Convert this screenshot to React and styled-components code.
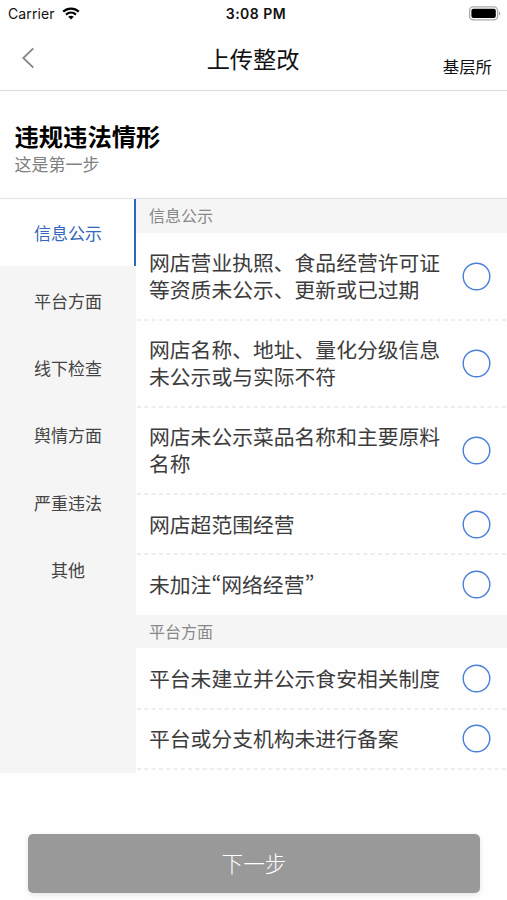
import React from 'react';
import styled, { createGlobalStyle } from 'styled-components';
import { useState } from 'react';


const GlobalStyle = createGlobalStyle`
* {
  box-sizing: border-box;
}
body {
  margin: 0;
  background: #fefefe;
  font-family: "Noto Sans CJK SC", sans-serif;
}
button {
  margin: 0;
  padding: 0;
  border: none;
  background: none;
  font-family: inherit;
  cursor: pointer;
}
`;

const Screen = styled.div`
width: 507px;
height: 900px;
display: flex;
flex-direction: column;
overflow: hidden;
`;

const StatusBar = styled.div`
display: grid;
grid-template-columns: 1fr auto 1fr;
align-items: center;
height: 27px;
padding: 0 6px 0 8px;
color: #111;
font-family: Inter, sans-serif;
font-size: 14px;
`;

const Carrier = styled.div`
display: flex;
align-items: center;
gap: 7px;
letter-spacing: 0.1px;
`;

const Time = styled.div`
padding-left: 3px;
font-size: 14px;
font-weight: 600;
letter-spacing: 0.5px;
`;

const Battery = styled.svg`
justify-self: end;
`;

const NavBar = styled.div`
display: grid;
grid-template-columns: 1fr auto 1fr;
align-items: center;
height: 64px;
padding: 0 15px 0 21px;
border-bottom: 1px solid #dcdcdc;
`;

const BackButton = styled.button`
display: flex;
justify-self: start;
padding-bottom: 1px;
`;

const NavTitle = styled.div`
padding: 0 7px 1px 0;
color: #111;
font-size: 23.2px;
line-height: 30px;
`;

const NavAction = styled.button`
justify-self: end;
padding-top: 14px;
color: #111;
font-size: 16.4px;
line-height: 24px;
`;

const Heading = styled.div`
height: 107px;
padding: 29px 14.5px 0;
`;

const HeadingTitle = styled.h1`
margin: 0;
color: #000;
font-size: 24.3px;
font-weight: 700;
line-height: 32px;
`;

const HeadingNote = styled.p`
margin: 0;
color: #808080;
font-size: 17px;
line-height: 23px;
`;

const Content = styled.div`
display: flex;
height: 575px;
border-top: 1px solid #e3e3e3;
`;

const Sidebar = styled.div`
display: flex;
flex-direction: column;
width: 136px;
background: #f5f5f5;
`;

const SidebarItem = styled.button`
height: 67.4px;
padding-left: 2px;
border-right: 2px solid ${props => props.$active ? '#2f66c4' : 'transparent'};
background: ${props => props.$active ? '#fefefe' : 'transparent'};
color: ${props => props.$active ? '#3468bd' : '#444'};
font-size: 17px;
`;

const List = styled.div`
flex: 1;
`;

const SectionTitle = styled.div`
height: 33.5px;
padding-left: 13px;
background: #f5f5f5;
color: #888;
font-size: 16px;
line-height: 32px;
`;

const Row = styled.div`
display: flex;
align-items: center;
justify-content: space-between;
height: ${props => props.$tall ? '87.2px' : '60.4px'};
padding: 0 16px 0 13px;
cursor: pointer;
`;

const Divider = styled.svg`
display: block;
width: 100%;
height: 2px;
margin: -1px 0;
`;

const RowText = styled.div`
width: 293px;
padding-bottom: 0.4px;
color: #3c3c3c;
font-size: 20.8px;
font-feature-settings: "pwid";
line-height: 27px;
`;

const Footer = styled.div`
padding: 61px 27px 0 28px;
`;

const NextButton = styled.button`
width: 100%;
height: 59px;
padding-bottom: 2px;
border-radius: 5px;
background: #999;
box-shadow: 0 2px 5px rgba(0, 0, 0, 0.1);
color: #fff;
font-size: 21.6px;
font-weight: 300;
`;


const sections = [
  {
    title: '信息公示',
    items: [
      '网店营业执照、食品经营许可证等资质未公示、更新或已过期',
      '网店名称、地址、量化分级信息未公示或与实际不符',
      '网店未公示菜品名称和主要原料名称',
      '网店超范围经营',
      '未加注“网络经营”',
    ],
  },
  {
    title: '平台方面',
    items: [
      '平台未建立并公示食安相关制度',
      '平台或分支机构未进行备案',
    ],
  },
]

const tabs = ['信息公示', '平台方面', '线下检查', '舆情方面', '严重违法', '其他']


const Radio=({checked})=> (
  <svg width="29" height="29" viewBox="0 0 29 29">
    <circle cx="14.5" cy="14.5" r="13.3" fill={checked ? '#4a80d8' : 'none'} stroke="#4a80d8" strokeWidth="1.4" />
  </svg>
)


const App=()=> {

  const [tab,setTab]=useState(tabs[0])
  const [checked,setChecked]=useState([])

  const toggle = (name) => {
    setChecked(checked.includes(name) ? checked.filter(c => c !== name) : [...checked, name])
  }

  return (
    <Screen>
      <GlobalStyle />

      <StatusBar>
        <Carrier>
          Carrier
          <svg width="18" height="13" viewBox="0 0 18 13">
            <path d="M1.2 4.7C5.6 .6 12.4 .6 16.8 4.7" fill="none" stroke="#000" strokeWidth="2.3" />
            <path d="M4 7.6C6.9 5 11.1 5 14 7.6" fill="none" stroke="#000" strokeWidth="2.1" />
            <path d="M6.2 9.7C7.8 8.3 10.2 8.3 11.8 9.7L9 12.6Z" fill="#000" />
          </svg>
        </Carrier>
        <Time>3:08 PM</Time>
        <Battery width="33" height="15" viewBox="0 0 33 15">
          <rect x="1.6" y="0.9" width="28" height="13" rx="3.6" fill="#fff" stroke="#aaa" strokeWidth="1.3" />
          <rect x="3.4" y="2.7" width="24.4" height="9.4" rx="2" fill="#000" />
          <path d="M31 5.4C32.7 6 32.7 8.9 31 9.5Z" fill="#999" />
        </Battery>
      </StatusBar>

      <NavBar>
        <BackButton>
          <svg width="14" height="22" viewBox="0 0 14 22">
            <path d="M12.3 1.4L2.3 11L12.3 20.6" fill="none" stroke="#858585" strokeWidth="1.8" />
          </svg>
        </BackButton>
        <NavTitle>上传整改</NavTitle>
        <NavAction>基层所</NavAction>
      </NavBar>

      <Heading>
        <HeadingTitle>违规违法情形</HeadingTitle>
        <HeadingNote>这是第一步</HeadingNote>
      </Heading>

      <Content>
        <Sidebar>
          {tabs.map(name => (
            <SidebarItem key={name} $active={name === tab} onClick={() => setTab(name)}>{name}</SidebarItem>
          ))}
        </Sidebar>

        <List>
          {sections.map((section, s) => (
            <div key={section.title}>
              <SectionTitle>{section.title}</SectionTitle>
              {section.items.map((item, i) => (
                <div key={item}>
                  <Row $tall={item.length > 14} onClick={() => toggle(item)}>
                    <RowText>{item}</RowText>
                    <Radio checked={checked.includes(item)} />
                  </Row>
                  {(i < section.items.length - 1 || s === sections.length - 1) && (
                    <Divider>
                      <line x1="1" y1="1" x2="100%" y2="1" stroke="#e8e8e8" strokeWidth="1.4" strokeDasharray="4 3.3" />
                    </Divider>
                  )}
                </div>
              ))}
            </div>
          ))}
        </List>
      </Content>

      <Footer>
        <NextButton>下一步</NextButton>
      </Footer>
    </Screen>
  );
}

export default App;
